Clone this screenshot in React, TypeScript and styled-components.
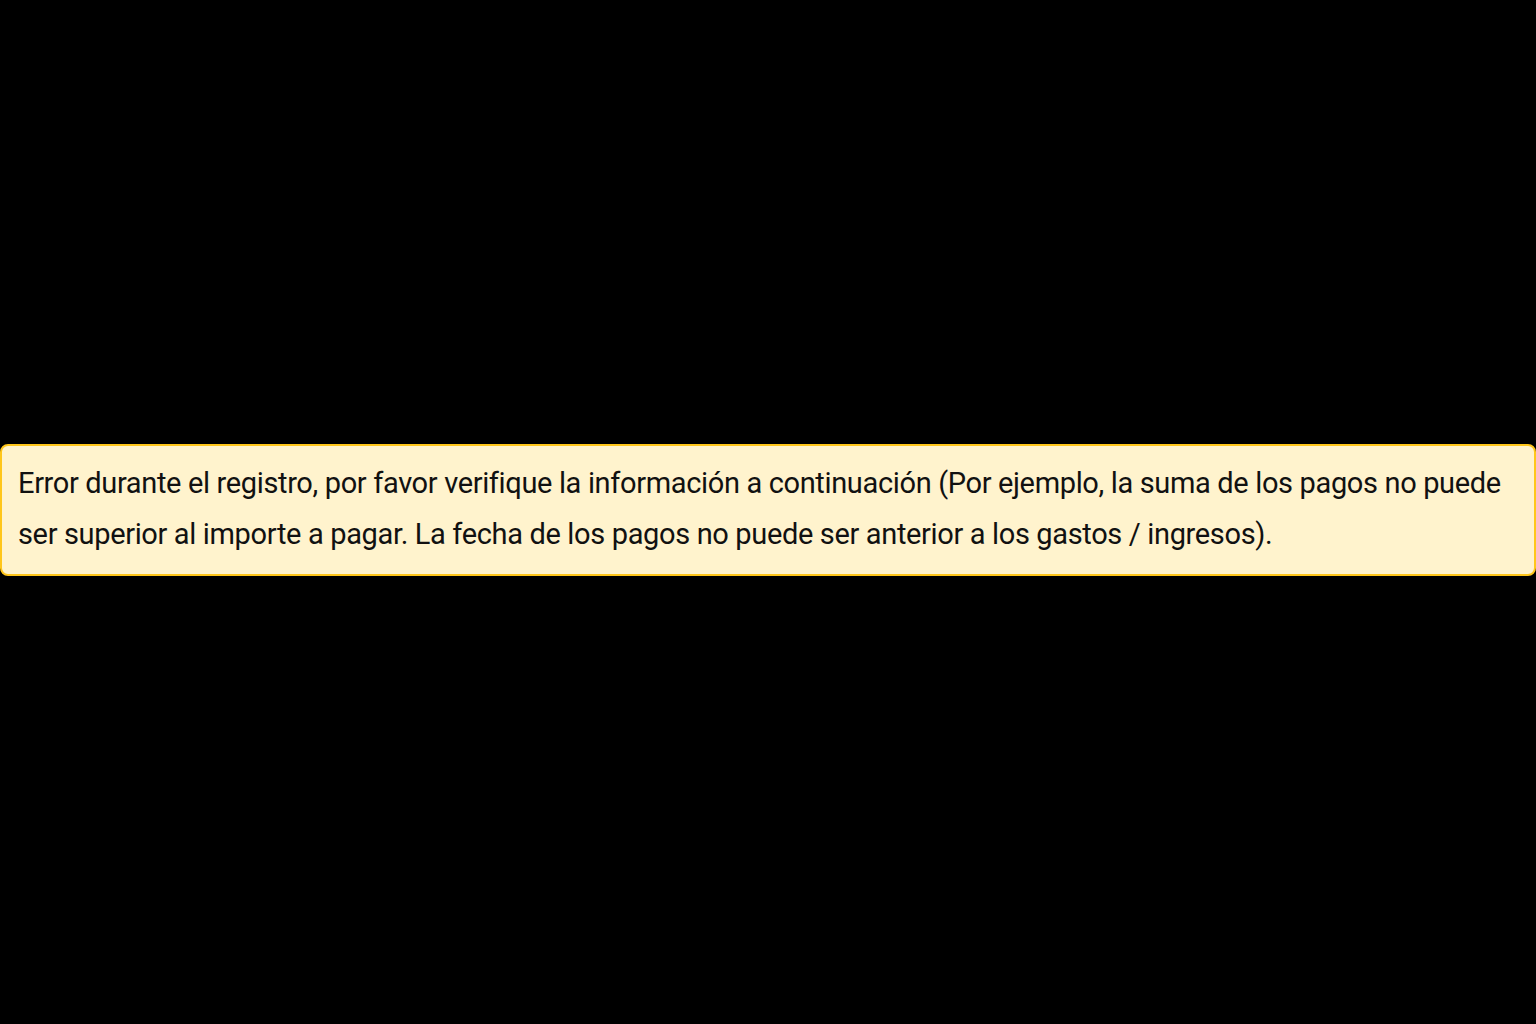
import styled, { createGlobalStyle } from 'styled-components';

const GlobalStyle = createGlobalStyle`
    html, body {
        margin: 0;
        padding: 0;
        background: #000;
    }
    #root {
        min-height: 100vh;
    }
`;

const Page = styled.div`
    width: 100%;
    height: 100vh;
    display: flex;
    align-items: center;
    justify-content: center;
    padding-bottom: 4px;
    box-sizing: border-box;
`;

const Alert = styled.div`
    width: 100%;
    box-sizing: border-box;
    padding: 12px 16px 14px 16px;
    background-color: #fff3cd;
    border: 2px solid #ffc61a;
    border-radius: 8px;
    color: #111;
    font-family: Roboto, 'Liberation Sans', sans-serif;
    font-size: 29px;
    letter-spacing: -0.35px;
    line-height: 51px;
`;

const App = () => {
    return (
        <>
            <GlobalStyle />
            <Page>
                <Alert>
                    Error durante el registro, por favor verifique la información a
                    continuación (Por ejemplo, la suma de los pagos no puede ser superior
                    al importe a pagar. La fecha de los pagos no puede ser anterior a los
                    gastos / ingresos).
                </Alert>
            </Page>
        </>
    );
};

export default App;
